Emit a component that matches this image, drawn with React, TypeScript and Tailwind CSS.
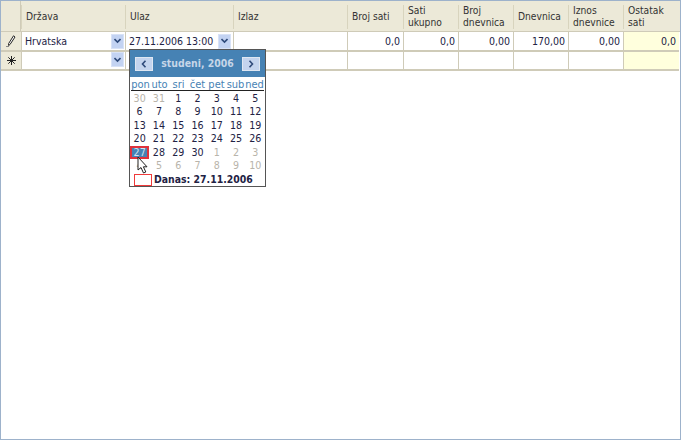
const cols = "grid-cols-[20px_104px_108px_114px_56px_55px_55px_55px_55px_56px]";

function Chevron() {
  return (
    <svg width="7" height="6" viewBox="0 0 7 6">
      <path d="M0.5 1 L3.5 4 L6.5 1" fill="none" stroke="#2f4a7a" strokeWidth="1.6" />
    </svg>
  );
}

function Drop() {
  return (
    <div className="flex h-[15px] w-[13px] shrink-0 items-center justify-center bg-[#c3d3f2] border border-[#d8e2f6]">
      <Chevron />
    </div>
  );
}

function Head({ children }: { children?: React.ReactNode }) {
  return (
    <div className="flex h-full items-center py-[4px] pr-[3px]">
      <div className="flex h-full w-full items-center border-l border-l-[#d8d4be] pl-[4px] text-[10.2px] leading-[12px] text-[#333]">
        {children}
      </div>
    </div>
  );
}

function Num({ v, yellow }: { v?: string; yellow?: boolean }) {
  return (
    <div className={`flex items-center justify-end border-l border-l-[#cfcbb8] border-b-2 border-b-[#cfcbb8] pr-[3px] pt-[2px] ${yellow ? "bg-[#ffffdd]" : "bg-white"}`}>
      {v}
    </div>
  );
}

function NavBtn({ dir }: { dir: "l" | "r" }) {
  return (
    <div className="flex h-[14px] w-[18px] items-center justify-center border border-[#dfe7f2] bg-[#c4d4ee]">
      <svg width="6" height="8" viewBox="0 0 6 8">
        <path d={dir === "l" ? "M4.5 0.8 L1.5 4 L4.5 7.2" : "M1.5 0.8 L4.5 4 L1.5 7.2"} fill="none" stroke="#2f4a7a" strokeWidth="1.6" />
      </svg>
    </div>
  );
}

const days: [string, boolean][] = [
  ["30", true], ["31", true], ["1", false], ["2", false], ["3", false], ["4", false], ["5", false],
  ["6", false], ["7", false], ["8", false], ["9", false], ["10", false], ["11", false], ["12", false],
  ["13", false], ["14", false], ["15", false], ["16", false], ["17", false], ["18", false], ["19", false],
  ["20", false], ["21", false], ["22", false], ["23", false], ["24", false], ["25", false], ["26", false],
  ["27", false], ["28", false], ["29", false], ["30", false], ["1", true], ["2", true], ["3", true],
  ["4", true], ["5", true], ["6", true], ["7", true], ["8", true], ["9", true], ["10", true],
];

function Calendar() {
  return (
    <div className="absolute left-[128px] top-[48px] z-10 w-[137px] border border-[#555] bg-white text-[11px]">
      <div className="flex h-[27px] items-center justify-between bg-[#4682b4] px-[5px]">
        <NavBtn dir="l" />
        <span className="text-[10.4px] font-bold text-[#c6d6e8]">studeni, 2006</span>
        <NavBtn dir="r" />
      </div>
      <div className="mx-[1px] grid h-[14px] grid-cols-7 border-b border-b-[#222] pt-[1px] leading-[13px] text-[#4682b4]">
        {["pon", "uto", "sri", "čet", "pet", "sub", "ned"].map((d) => (
          <div key={d} className="text-center">{d}</div>
        ))}
      </div>
      <div className="mt-[1px] grid grid-cols-7 text-[10.6px] leading-[13px]">
        {days.map(([d, muted], i) =>
          i === 28 ? (
            <div key={i} className="h-[13.4px] border-2 border-[#e0323c] bg-[#4682b4] text-center leading-[9px] text-[#d3e1f0]">{d}</div>
          ) : (
            <div key={i} className={`h-[13.4px] text-center ${muted ? "text-[#b8b4aa]" : "text-[#222244]"}`}>{d}</div>
          )
        )}
      </div>
      <div className="mt-[1px] flex h-[13px] items-end gap-[2px] pl-[4px] text-[10.4px] font-bold leading-[13px] text-[#222244]">
        <div className="h-[12px] w-[18px] border border-[#f03a3a] bg-white" />
        <span>Danas: 27.11.2006</span>
      </div>
    </div>
  );
}

function Cursor() {
  return (
    <svg className="absolute left-[136px] top-[155px] z-20" width="13" height="19" viewBox="0 0 13 19">
      <path d="M1 1 V14 L4 11.5 L6.5 17 L8.8 16 L6.4 10.8 H10 Z" fill="#fff" stroke="#222" strokeWidth="1" strokeLinejoin="round" />
    </svg>
  );
}

export default function App() {
  return (
    <div
      className="relative h-[440px] w-[681px] overflow-hidden border border-[#9db2cb] bg-white text-[10.5px] text-[#222244]"
      style={{ fontFamily: '"DejaVu Sans Condensed", "Liberation Sans", sans-serif' }}
    >
      <div className={`grid ${cols} h-[31px] items-stretch bg-[#ece9d8] border-b border-b-[#cfcbb8]`}>
        <div className="border-r border-r-[#cfcbb8]" />
        <Head>Država</Head>
        <Head>Ulaz</Head>
        <Head>Izlaz</Head>
        <Head>Broj sati</Head>
        <Head>Sati ukupno</Head>
        <Head>Broj dnevnica</Head>
        <Head>Dnevnica</Head>
        <Head>Iznos dnevnice</Head>
        <Head>Ostatak sati</Head>
      </div>

      <div className={`grid ${cols} h-[20px]`}>
        <div className="flex items-center justify-center bg-[#ece9d8] border-b-2 border-b-[#cfcbb8]">
          <svg width="10" height="12" viewBox="0 0 10 12">
            <path d="M7.5 0.8 L9 2 L4 9.5 L2.6 10.5 L2.6 8.6 Z" fill="#fff" stroke="#222" strokeWidth="1" />
            <path d="M0 11.5 H3" stroke="#888" strokeWidth="1" />
          </svg>
        </div>
        <div className="flex items-center justify-between border-l border-l-[#cfcbb8] border-b-2 border-b-[#cfcbb8] pl-[3px] pr-[1px]">
          <span className="pt-[2px]">Hrvatska</span>
          <Drop />
        </div>
        <div className="flex items-center justify-between border-l border-l-[#cfcbb8] border-b-2 border-b-[#cfcbb8] pl-[3px] pr-[2px]">
          <span className="pt-[2px]">27.11.2006 13:00</span>
          <Drop />
        </div>
        <Num />
        <Num v="0,0" />
        <Num v="0,0" />
        <Num v="0,00" />
        <Num v="170,00" />
        <Num v="0,00" />
        <Num v="0,0" yellow />
      </div>

      <div className={`grid ${cols} h-[19px]`}>
        <div className="flex items-center justify-center bg-[#ece9d8] border-b-2 border-b-[#cfcbb8]">
          <svg width="9" height="9" viewBox="0 0 9 9">
            <path d="M4.5 0 V9 M0 4.5 H9 M1.3 1.3 L7.7 7.7 M7.7 1.3 L1.3 7.7" stroke="#222" strokeWidth="1" />
          </svg>
        </div>
        <div className="flex items-start justify-end border-l border-l-[#cfcbb8] border-b-2 border-b-[#cfcbb8] pr-[1px]">
          <Drop />
        </div>
        <Num />
        <Num />
        <Num />
        <Num />
        <Num />
        <Num />
        <Num />
        <Num yellow />
      </div>

      <Calendar />
      <Cursor />
    </div>
  );
}
